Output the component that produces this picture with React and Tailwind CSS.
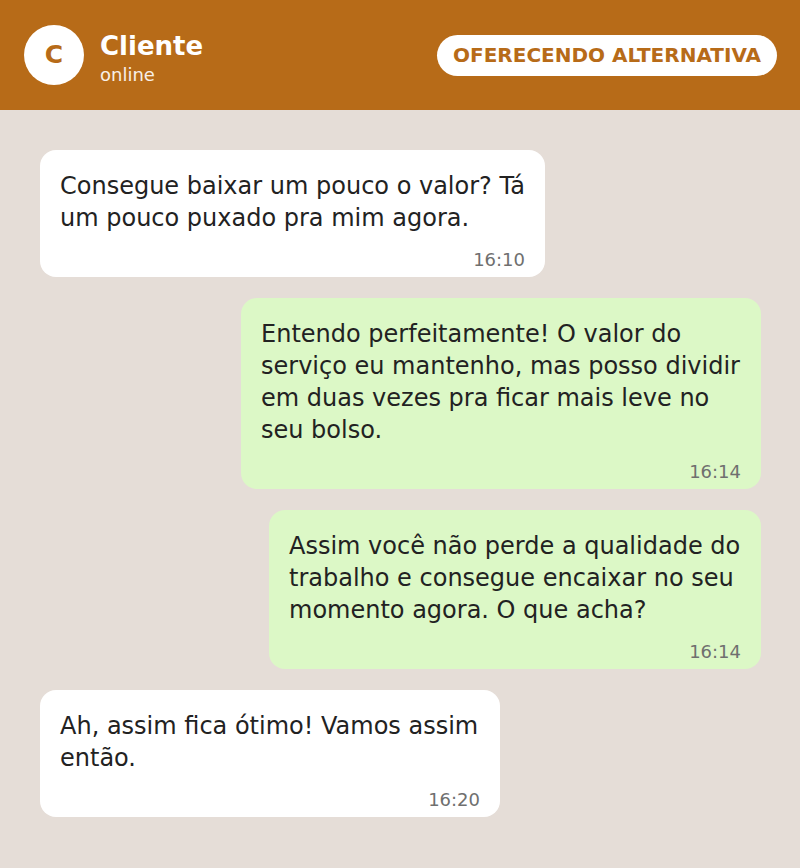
const messages = [
  { from: "them", text: "Consegue baixar um pouco o valor? Tá um pouco puxado pra mim agora.", time: "16:10", width: "w-[505px]" },
  { from: "me", text: "Entendo perfeitamente! O valor do serviço eu mantenho, mas posso dividir em duas vezes pra ficar mais leve no seu bolso.", time: "16:14", width: "w-[520px]" },
  { from: "me", text: "Assim você não perde a qualidade do trabalho e consegue encaixar no seu momento agora. O que acha?", time: "16:14", width: "w-[492px]" },
  { from: "them", text: "Ah, assim fica ótimo! Vamos assim então.", time: "16:20", width: "w-[460px]" },
];

const App = () => {
  return (
    <div className="min-h-[868px] bg-[#e5ddd7] font-['DejaVu_Sans',sans-serif]">
      {/* Header */}
      <div className="h-[110px] bg-[#b76b18] pl-6 pr-[23px] flex items-center justify-between">
        <div className="flex items-center gap-4">
          <div className="w-[60px] h-[60px] rounded-full bg-white flex items-center justify-center text-[#b76b18] text-[25px] font-bold">
            C
          </div>
          <div className="flex flex-col pt-2">
            <span className="text-white text-[26px] font-bold leading-[30px]">Cliente</span>
            <span className="text-white/90 text-[18px] leading-[24px] mt-[2px]">online</span>
          </div>
        </div>
        <div className="bg-white rounded-full h-[41px] px-4 flex items-center text-[#b76b18] text-[20px] font-bold">
          OFERECENDO ALTERNATIVA
        </div>
      </div>

      {/* Messages */}
      <div className="pl-10 pr-[39px] pt-10 pb-10 flex flex-col gap-[21px]">
        {messages.map((m, i) => (
          <div key={i} className={m.from === "me" ? "flex justify-end" : "flex justify-start"}>
            <div
              className={`${m.width} rounded-2xl px-5 pt-5 pb-[7px] ${
                m.from === "me" ? "bg-[#dcf8c6]" : "bg-white"
              }`}
            >
              <p className="text-[24px] leading-[32px] text-[#222]">{m.text}</p>
              <p className="text-right text-[18px] leading-[20px] mt-[16px] text-[#6f6f6f]">{m.time}</p>
            </div>
          </div>
        ))}
      </div>
    </div>
  );
};

export default App;
